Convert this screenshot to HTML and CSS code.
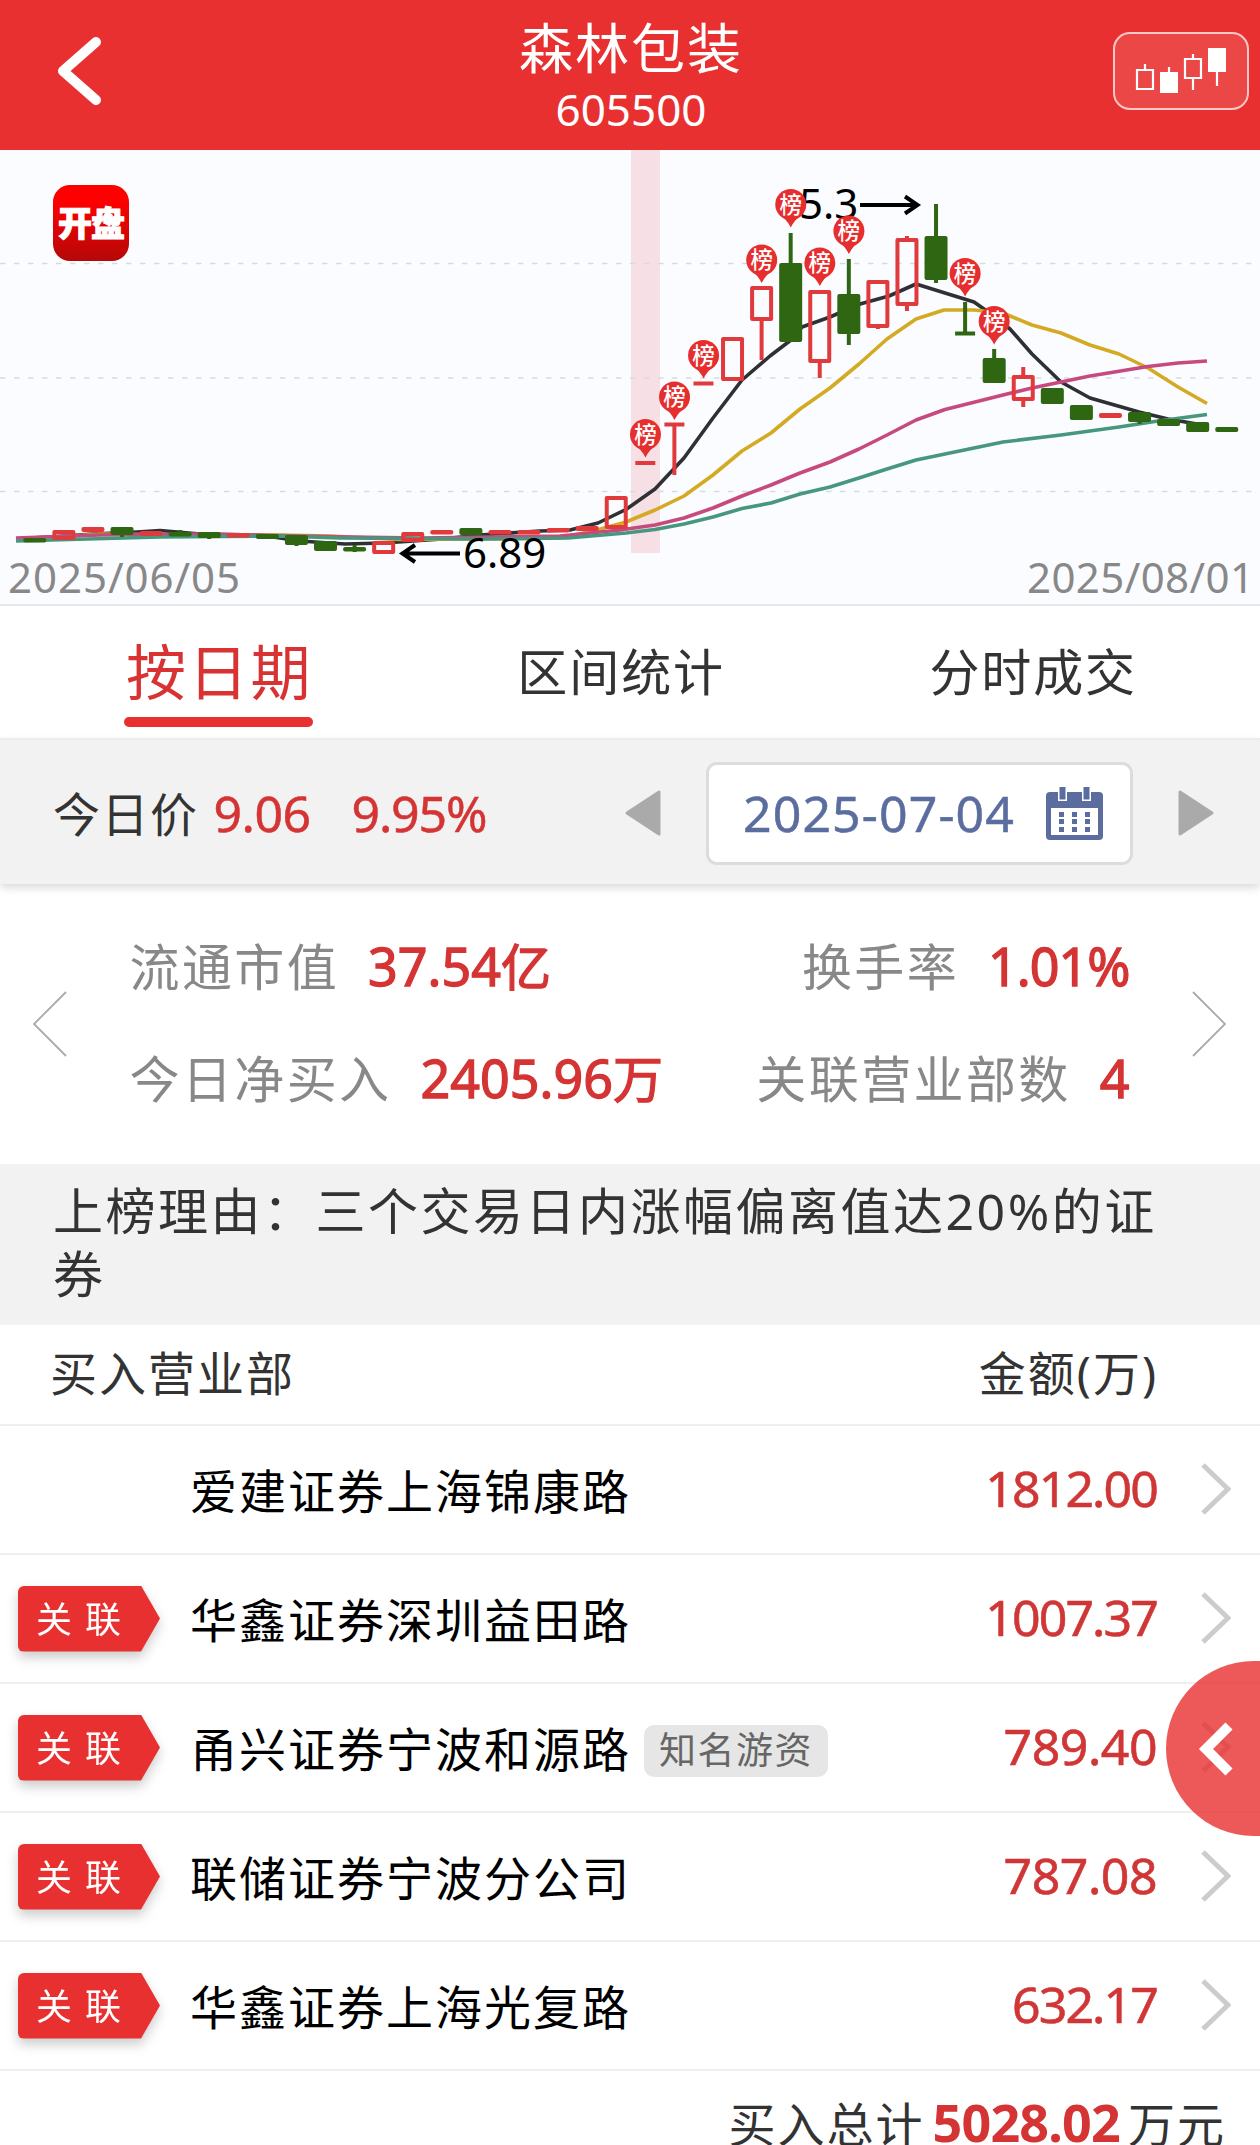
FILE: index.html
```html
<!DOCTYPE html>
<html lang="zh-CN">
<head>
    <meta charset="UTF-8">
    <meta name="viewport" content="width=device-width, initial-scale=1.0">
    <title>森林包装 605500</title>
    <link rel="stylesheet" href="styles.css">
</head>
<body>
    <header class="header">
        <svg class="back" width="54" height="76" viewBox="0 0 54 76"><path d="M43 9 L10 38 L43 67" /></svg>
        <div class="header-title">
            <h1>森林包装</h1>
            <span>605500</span>
        </div>
        <div class="kline-button">
            <svg width="136" height="78" viewBox="0 0 136 78">
                <g fill="none" stroke="#fff" stroke-width="2.2">
                    <path d="M24 38h16v19h-16zM32 32v6M72 27h16v19h-16zM80 22v5M80 46v12M56 35v6M104 38v16" />
                </g>
                <path d="M47 40h18v21h-18zM95 16h18v24h-18z" fill="#fff" />
            </svg>
        </div>
    </header>

    <section class="chart">
        <svg id="kline" width="1260" height="454" viewBox="0 150 1260 454"></svg>
        <div class="logo">开盘</div>
    </section>

    <nav class="tabs">
        <a class="tab active">按日期</a>
        <a class="tab">区间统计</a>
        <a class="tab">分时成交</a>
    </nav>

    <section class="price-bar">
        <span class="price-label">今日价</span>
        <span class="price">9.06</span>
        <span class="price percent">9.95%</span>
        <svg class="prev" width="36" height="48" viewBox="0 0 36 48"><path d="M34 3v42L2 24z" /></svg>
        <div class="date-box">
            <span>2025-07-04</span>
            <svg width="57" height="53" viewBox="0 0 57 53">
                <rect y="5" width="57" height="48" rx="4" fill="#5b6d9f" />
                <path d="M5 21h47v27H5z" fill="#fff" />
                <path d="M12 0h9v14h-9zM36 0h9v14h-9z" fill="#fff" />
                <path d="M13.500 0h6v12.500h-6zM37.500 0h6v12.500h-6z" fill="#5b6d9f" />
                <path d="M13 25h5v5h-5zM26 25h5v5h-5zM39 25h5v5h-5zM13 32h5v5h-5zM26 32h5v5h-5zM39 32h5v5h-5zM13 40h5v5h-5zM26 40h5v5h-5zM39 40h5v5h-5z" fill="#5b6d9f" />
            </svg>
        </div>
        <svg class="next" width="36" height="48" viewBox="0 0 36 48"><path d="M2 3v42l32-21z" /></svg>
    </section>

    <section class="stats">
        <svg class="stats-arrow" width="34" height="68" viewBox="0 0 34 68"><path d="M33 2L1 34l32 32" /></svg>
        <div class="stats-body">
            <div class="stats-row">
                <div>流通市值<b>37.54<i>亿</i></b></div>
                <div>换手率<b class="ones">1.01%</b></div>
            </div>
            <div class="stats-row">
                <div>今日净买入<b>2405.96<i>万</i></b></div>
                <div>关联营业部数<b>4</b></div>
            </div>
        </div>
        <svg class="stats-arrow" width="34" height="68" viewBox="0 0 34 68"><path d="M1 2l32 32L1 66" /></svg>
    </section>

    <section class="reason">上榜理由：三个交易日内涨幅偏离值达20%的证券</section>

    <section class="list">
        <div class="list-head">
            <span>买入营业部</span>
            <span>金额(万)</span>
        </div>
        <div class="row">
            <div class="tag-cell"></div>
            <span class="name">爱建证券上海锦康路</span>
            <span class="amount ones">1812.00</span>
            <svg class="arrow" width="30" height="52" viewBox="0 0 30 52"><path d="M2 2l25 24L2 50" /></svg>
        </div>
        <div class="row">
            <div class="tag-cell"><span class="tag">关联</span></div>
            <span class="name">华鑫证券深圳益田路</span>
            <span class="amount ones">1007.37</span>
            <svg class="arrow" width="30" height="52" viewBox="0 0 30 52"><path d="M2 2l25 24L2 50" /></svg>
        </div>
        <div class="row">
            <div class="tag-cell"><span class="tag">关联</span></div>
            <span class="name">甬兴证券宁波和源路</span>
            <span class="badge">知名游资</span>
            <span class="amount">789.40</span>
            <svg class="arrow" width="30" height="52" viewBox="0 0 30 52"><path d="M2 2l25 24L2 50" /></svg>
        </div>
        <div class="row">
            <div class="tag-cell"><span class="tag">关联</span></div>
            <span class="name">联储证券宁波分公司</span>
            <span class="amount">787.08</span>
            <svg class="arrow" width="30" height="52" viewBox="0 0 30 52"><path d="M2 2l25 24L2 50" /></svg>
        </div>
        <div class="row">
            <div class="tag-cell"><span class="tag">关联</span></div>
            <span class="name">华鑫证券上海光复路</span>
            <span class="amount ones">632.17</span>
            <svg class="arrow" width="30" height="52" viewBox="0 0 30 52"><path d="M2 2l25 24L2 50" /></svg>
        </div>
        <div class="total">买入总计<b>5028.02</b>万元</div>
    </section>

    <div class="drawer">
        <svg width="94" height="175" viewBox="0 0 94 175"><path d="M63 65L40 88l23 23" /></svg>
    </div>

    <script src="chart.js"></script>
</body>
</html>
```
FILE: styles.css
```css
* {
    box-sizing: border-box;
}

body {
    font-family: "Noto Sans", "Noto Sans CJK SC", sans-serif;
    background-color: #fff;
    color: #333;
    margin: 0;
    padding: 0;
    width: 1260px;
    height: 2145px;
    overflow: hidden;
    position: relative;
}

svg {
    display: block;
    flex: none;
}

/* header */
.header {
    height: 150px;
    padding: 0 11px 0 50px;
    background-color: #e93030;
    color: #fff;
    display: flex;
    align-items: center;
    justify-content: space-between;
}

.back {
    margin-top: -8px;
    margin-left: 3px;
}

.back path {
    fill: none;
    stroke: #fff;
    stroke-width: 10;
    stroke-linecap: round;
    stroke-linejoin: round;
}

.header-title {
    margin-left: 42px;
    text-align: center;
    height: 150px;
}

.header-title h1 {
    margin: 10px 0 0;
    font-size: 54px;
    font-weight: normal;
    line-height: 76px;
    letter-spacing: 2px;
}

.header-title span {
    display: block;
    font-size: 44px;
    line-height: 46px;
}

.kline-button {
    width: 136px;
    height: 78px;
    margin-top: -8px;
    border-radius: 17px;
    background-color: #ec4747;
    box-shadow: inset 0 0 0 2px #fbc8c8;
}

/* chart */
.chart {
    position: relative;
    height: 456px;
    background-color: #fbfcff;
    border-bottom: 2px solid #e8e8ea;
}

.logo {
    position: absolute;
    left: 53px;
    top: 35px;
    width: 76px;
    height: 76px;
    border-radius: 17px;
    background: linear-gradient(#ff0000 20%, #b50808);
    color: #fff;
    font-size: 34px;
    font-weight: 900;
    line-height: 76px;
    text-align: center;
    letter-spacing: -1px;
    -webkit-text-stroke: 1px #fff;
}

.grid {
    stroke: #d9dade;
    stroke-width: 1.3;
    stroke-dasharray: 5.5 8.5;
}

.ma {
    fill: none;
    stroke-width: 3.6;
    stroke-linejoin: round;
}

.up {
    fill: none;
    stroke: #e03a3c;
    stroke-width: 4;
}

.down {
    fill: #2f6612;
    stroke: #2f6612;
    stroke-width: 4;
}

.up, .down {
    stroke-linejoin: round;
}

.pin {
    fill: #e62e2e;
}

.pin-text {
    fill: #fff;
    font-size: 22.5px;
    font-weight: 500;
    text-anchor: middle;
}

.note {
    fill: #000;
    font-size: 42px;
}

.note-line {
    fill: none;
    stroke: #000;
    stroke-width: 4;
}

.date {
    fill: #888;
    font-size: 42px;
}

/* tabs */
.tabs {
    height: 132px;
    padding: 0 123px 0 124px;
    display: flex;
    justify-content: space-between;
}

.tab {
    font-size: 50px;
    line-height: 132px;
    letter-spacing: 1.9px;
}

.tab.active {
    height: 132px;
    padding: 0 0 0 2px;
    font-size: 60px;
    letter-spacing: 2.3px;
    color: #d83232;
}

.tab.active::after {
    content: "";
    display: block;
    height: 10px;
    margin: -21px 0 0 -2px;
    border-radius: 5px;
    background-color: #e93030;
}

/* price and date */
.price-bar {
    height: 146px;
    padding: 2px 46px 0 53px;
    background-color: #f2f2f2;
    border-top: 2px solid #ececec;
    box-shadow: 0 4px 8px rgba(0, 0, 0, 0.14);
    display: flex;
    align-items: center;
}

.price-label {
    font-size: 47px;
    letter-spacing: 1.5px;
    margin-top: -4px;
}

.price {
    margin-left: 15px;
    width: 98px;
    font-size: 50px;
    letter-spacing: -0.5px;
    color: #d53434;
    -webkit-text-stroke: 0.5px;
}

.percent {
    margin-left: 40px;
    width: 150px;
    letter-spacing: -1.2px;
}

.prev, .next {
    fill: #aaa;
    stroke: #aaa;
    stroke-width: 3;
    stroke-linejoin: round;
}

.prev {
    margin-left: auto;
    margin-right: 45px;
}

.next {
    margin-left: 45px;
}

.date-box {
    width: 427px;
    height: 103px;
    padding: 0 27px 0 34px;
    background-color: #fff;
    border: 3px solid #dcdcdc;
    border-radius: 11px;
    display: flex;
    align-items: center;
    justify-content: space-between;
    font-size: 50px;
    letter-spacing: 1.1px;
    color: #5b6d9f;
    -webkit-text-stroke: 0.5px;
}

/* stats */
.stats {
    height: 280px;
    padding: 0 34px 0 33px;
    display: flex;
    align-items: center;
    justify-content: space-between;
}

.stats-arrow {
    fill: none;
    stroke: #aaa;
    stroke-width: 1.8;
}

.stats-body {
    width: 1000px;
    padding-bottom: 8px;
}

.stats-row {
    height: 112px;
    display: flex;
    align-items: center;
    justify-content: space-between;
    font-size: 50px;
    letter-spacing: 2.4px;
    color: #888;
}

.stats-row b {
    margin-left: 29px;
    font-size: 52px;
    font-weight: normal;
    letter-spacing: 0;
    color: #d53434;
    -webkit-text-stroke: 1.3px;
}

.stats-row i {
    font-style: normal;
    font-size: 50px;
}

.stats-row .ones {
    letter-spacing: -1px;
}

/* reason */
.reason {
    height: 161px;
    padding: 16px 90px 0 53px;
    background-color: #f2f2f2;
    font-size: 50px;
    line-height: 63px;
    letter-spacing: 2.5px;
}

/* list */
.list-head {
    height: 101px;
    padding: 0 102px 8px 50px;
    display: flex;
    align-items: center;
    justify-content: space-between;
    font-size: 47px;
    letter-spacing: 2px;
    border-bottom: 2px solid #efefef;
}

.row {
    height: 129px;
    padding-right: 29px;
    display: flex;
    align-items: center;
    border-bottom: 2px solid #efefef;
}

.tag-cell {
    width: 190px;
    padding-left: 18px;
    filter: drop-shadow(0 6px 6px rgba(0, 0, 0, 0.2));
}

.tag {
    display: block;
    width: 142px;
    height: 66px;
    padding-left: 18px;
    border-radius: 6px;
    clip-path: polygon(0 0, 123px 0, 142px 50%, 123px 100%, 0 100%);
    background-color: #e93030;
    color: #fff;
    font-size: 36px;
    line-height: 67px;
    letter-spacing: 13px;
    white-space: nowrap;
}

.name {
    font-size: 47px;
    letter-spacing: 2px;
    color: #000;
    margin-top: -2px;
}

.badge {
    margin-left: 13px;
    margin-top: 6px;
    width: 184px;
    height: 52px;
    border-radius: 10px;
    background-color: #e6e6e6;
    color: #666;
    font-size: 37px;
    line-height: 50px;
    letter-spacing: 1.5px;
    text-align: center;
}

.amount {
    margin-left: auto;
    margin-top: -3px;
    font-size: 50px;
    letter-spacing: -0.5px;
    color: #d03636;
    -webkit-text-stroke: 0.6px;
}

.amount.ones {
    letter-spacing: -1.9px;
}

.arrow {
    margin-left: 44px;
    margin-top: -2px;
    fill: none;
    stroke: #ccc;
    stroke-width: 5;
}

.total {
    height: 102px;
    padding-right: 34px;
    font-size: 47px;
    line-height: 101px;
    letter-spacing: 2px;
    text-align: right;
}

.total b {
    margin: 0 8px 0 8px;
    font-size: 52px;
    letter-spacing: -0.8px;
    color: #d53434;
}

/* side drawer handle, lies over the list */
.drawer {
    position: absolute;
    right: 0;
    top: 1661px;
    width: 94px;
    height: 175px;
    border-radius: 88px 0 0 88px;
    background-color: rgba(233, 48, 48, 0.8);
}

.drawer path {
    fill: none;
    stroke: #fff;
    stroke-width: 10;
}
```
FILE: chart.js
```js
const svg = document.getElementById('kline');

// x step between two trading days
const STEP = 29.06;
const FIRST = 34.8;

// [type, body top, body bottom, wick top, wick bottom]
// u: hollow up, s: flat up, d: down, l: single line up, t: single line down
const candles = [
    ['d', 538, 540], ['u', 530, 540], ['s', 527, 532], ['d', 527, 535, 527, 537],
    ['s', 531, 536], ['d', 532, 534, 530, 536], ['d', 532, 538, 532, 539], ['s', 533, 537],
    ['d', 534, 539], ['d', 535, 545, 535, 546], ['d', 541, 551], ['d', 547, 550, 545, 552],
    ['u', 541, 554], ['u', 532, 542], ['s', 530, 534], ['d', 528, 535],
    ['s', 530, 534], ['s', 530, 534], ['s', 528, 532], ['s', 526, 531],
    ['u', 496, 529], ['l', 463, 463], ['l', 424.5, 424.5, 424.5, 475], ['l', 383.5, 383.5],
    ['u', 337, 381], ['u', 286, 321, 286, 360], ['d', 263, 342, 233, 342], ['u', 290, 363, 290, 378],
    ['d', 294, 334, 259, 345], ['u', 280, 328, 280, 329], ['u', 238, 306, 236, 311], ['d', 236, 280, 204, 283],
    ['t', 333.5, 333.5, 302, 333.5], ['d', 358, 383, 349, 383], ['u', 375, 401, 367, 407], ['d', 388, 404],
    ['d', 405, 420], ['s', 413, 418], ['d', 412, 422, 412, 424], ['d', 419, 426],
    ['d', 422, 432], ['d', 427, 432]
];

const lines = {
    '#2f3033': '16,539 64,536 93,534 137,532 160,530.5 200,534 260,535 300,541 345,544 384,543 442,539 480,535 540,531 570,530 598,523 626,509.5 655,489 684,458 713,418 742,380 770,356 791,340 802,327 830,317 860,304 889,296 916,284 974,302 994,316 1010,329 1032,354 1061,382 1090,398 1139,412 1168,419 1197,424',
    '#d3aa22': '16,540 100,534 200,535 280,535 330,536 400,539.5 480,539 560,538 597,530 626,522 655,510 684,496 713,475 742,451 771,433 800,409 830,388 859,364 887,339 916,319 944,310 974,310 1003,313 1032,325 1061,333 1090,345 1119,354 1148,368 1178,387 1207,403.5',
    '#c74a7e': '16,538 100,535 200,534 350,537 420,538 560,536 620,530 655,525 684,518 713,508 742,496 771,485 800,473 830,462 859,449 887,435 916,420 945,409.5 1003,395 1032,388 1061,382 1090,376 1148,366.5 1178,363 1207,361',
    '#47977f': '16,541 160,537 280,536 340,538 480,539 568,538 626,533 655,529.5 684,524 713,517 742,508.5 771,503 800,494 830,487 859,478 887,469 916,460 945,454 1003,442 1061,435 1119,427 1158,421 1207,414.5'
};

// [candle index, centre y]
const pins = [[21, 434.5], [22, 397], [23, 355.5], [25, 260], [26, 204.5], [27, 263], [28, 231], [32, 273.5], [33, 321.5]];

let html = '<rect x="631" y="150" width="29" height="403" fill="#f6dfe5" />';

[263.5, 378, 491.5].forEach(y => {
    html += `<path class="grid" d="M0 ${y}H1255" />`;
});

for (const color in lines) {
    html += `<polyline class="ma" stroke="${color}" points="${lines[color]}" />`;
}

candles.forEach(([type, top, bottom, high, low], i) => {
    const x = FIRST + i * STEP + i * 0.012;
    const cls = type === 'd' || type === 't' ? 'down' : 'up';
    if (type === 'l' || type === 't') {
        html += `<path class="${cls}" d="M${x - 10} ${top}h20" />`;
    } else {
        const fill = type === 's' ? ' fill="#e03a3c"' : '';
        const h = Math.max(bottom - top - 4, 0.5);
        html += `<rect class="${cls}"${fill} x="${x - 9.5}" y="${top + 2}" width="19" height="${h}" />`;
    }
    if (high !== undefined) {
        html += `<path class="${cls}" d="M${x} ${high}V${top}M${x} ${bottom}V${low}" />`;
    }
});

html += '<text class="note" x="799" y="219">5.3</text>';
html += '<path class="note-line" d="M860 205H917M905 196.500L917.500 205L905 213.500" />';
html += '<text class="note" x="463" y="568">6.89</text>';
html += '<path class="note-line" d="M460 553.500H403M415 545L402.500 553.500L415 562" />';

pins.forEach(([i, y]) => {
    const x = FIRST + i * STEP + 0.4;
    html += `<circle class="pin" cx="${x}" cy="${y}" r="15.5" />`;
    html += `<path class="pin" d="M${x - 11} ${y + 10}q7 5 11 13q4 -8 11 -13z" />`;
    html += `<text class="pin-text" x="${x}" y="${y + 8}">榜</text>`;
});

html += '<text class="date" x="8" y="593" textLength="232">2025/06/05</text>';
html += '<text class="date" x="1027" y="593" textLength="227">2025/08/01</text>';

svg.innerHTML = html;
```
